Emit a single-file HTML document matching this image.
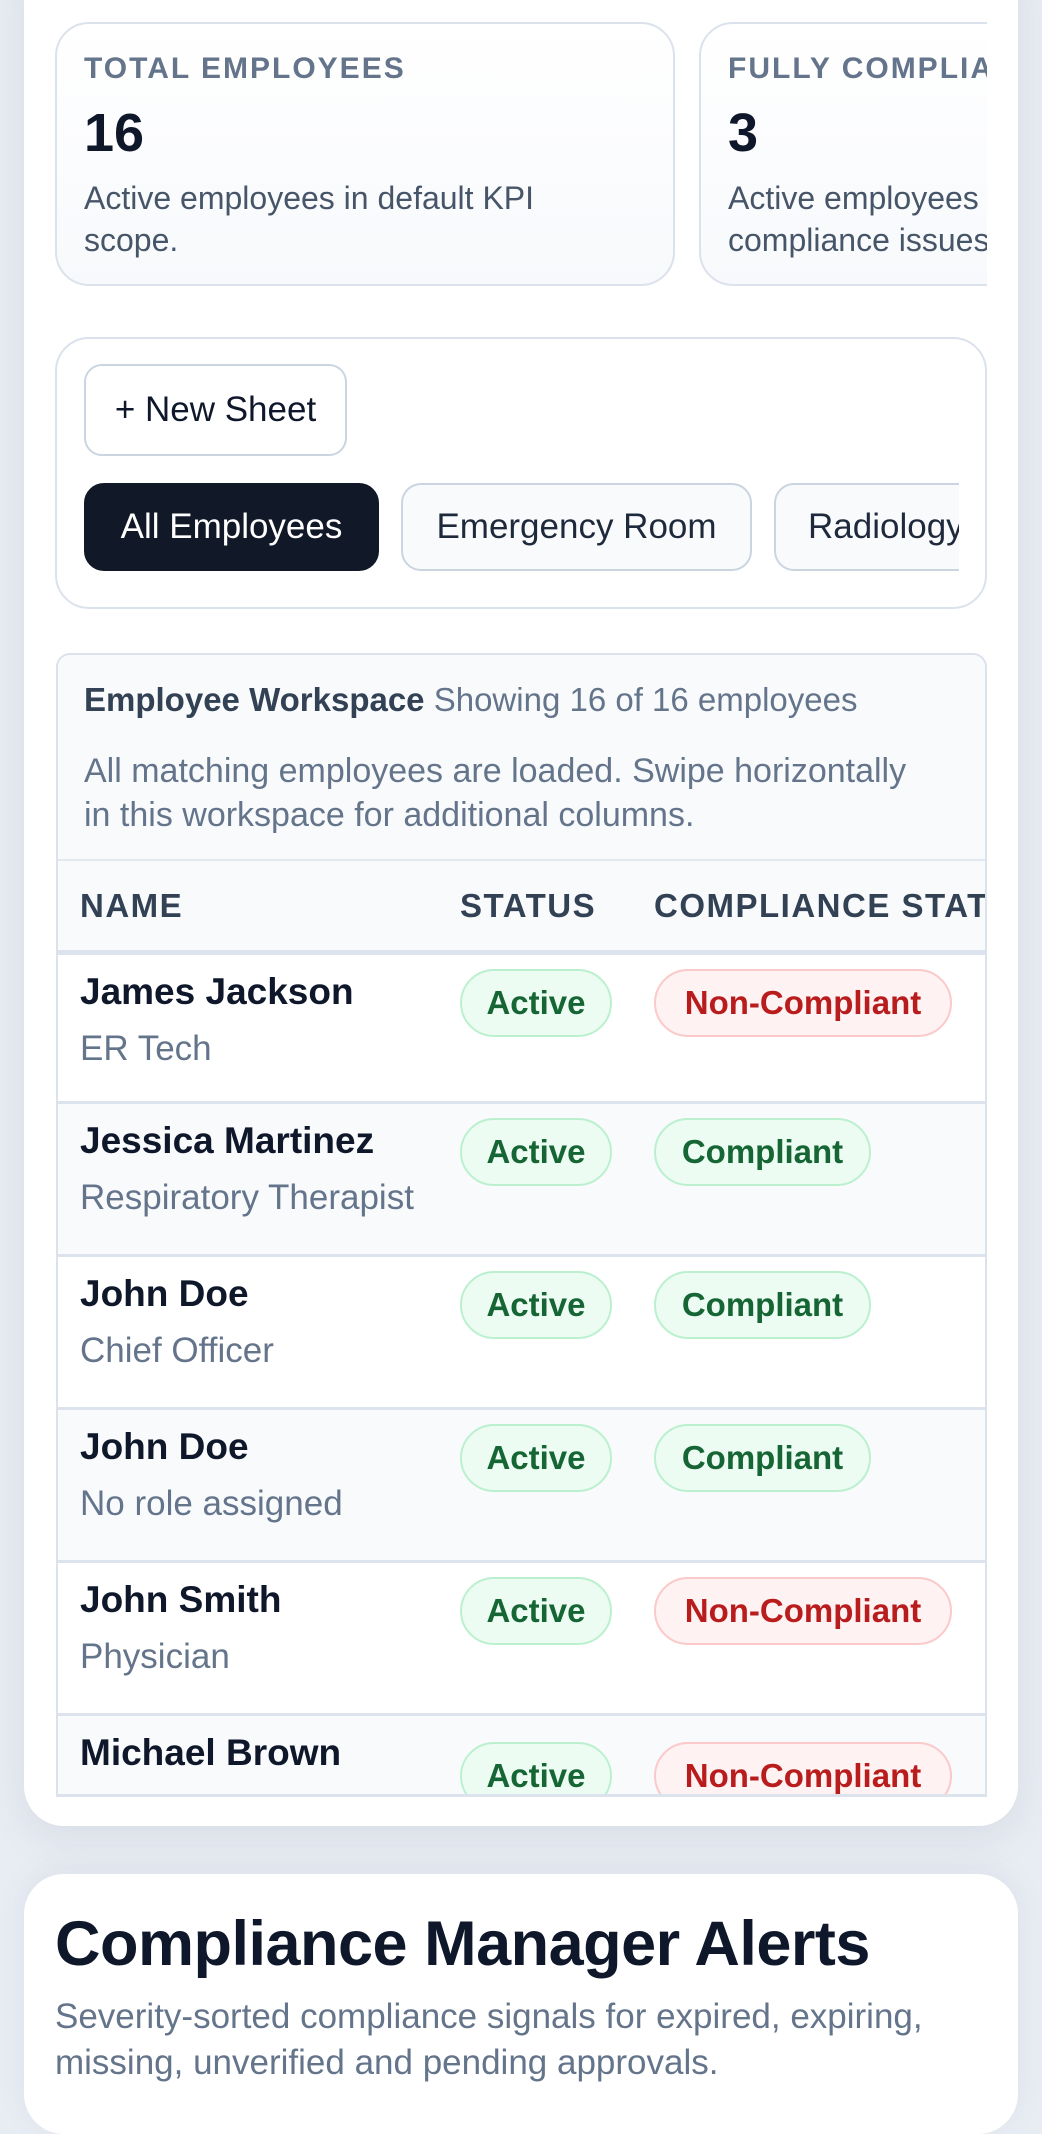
<!DOCTYPE html>
<html><head><meta charset="utf-8">
<style>
*{box-sizing:border-box;margin:0;padding:0}
html,body{width:1042px;height:2048px;overflow:hidden;background:#e8ecf3;font-family:"Liberation Sans",sans-serif}
.abs{position:absolute}
.outer{left:24px;top:-60px;width:994px;height:1886px;background:#fff;border-radius:40px;box-shadow:0 10px 40px rgba(100,116,139,.12)}
.kpi{border:2px solid #dbe2ec;border-radius:34px;background:linear-gradient(#fff,#f7f9fc);height:264px;top:22px}
.lbl{font-size:30px;font-weight:bold;color:#64748b;letter-spacing:2px;position:absolute;left:27px;top:28px;white-space:nowrap}
.num{font-size:54px;font-weight:bold;color:#0f172a;position:absolute;left:27px;top:78px}
.desc{font-size:32px;color:#475569;line-height:42px;position:absolute;left:27px;top:153px;white-space:nowrap}
.btn{border:2px solid #cbd5e1;border-radius:18px;font-size:35px;display:flex;align-items:center;justify-content:center;white-space:nowrap}
.ws{left:56px;top:653px;width:931px;height:1143px;overflow:hidden;border:2px solid #dbe2ec;border-bottom:none;border-radius:14px 14px 0 0}
.row{position:absolute;left:0;width:931px;height:153px;border-top:3px solid #dde3ec}
.nm{position:absolute;left:22px;top:16px;font-size:37px;font-weight:bold;color:#0f172a;white-space:nowrap}
.rl{position:absolute;left:22px;top:74px;font-size:35px;color:#64748b;white-space:nowrap}
.pill{position:absolute;top:14px;height:68px;border-radius:34px;font-size:33px;font-weight:bold;display:flex;align-items:center;justify-content:center}
.g{background:#edfcf2;border:2px solid #bbf0cf;color:#166534}
.r{background:#fef2f2;border:2px solid #fbc9c9;color:#b91c1c}
.th{position:absolute;top:26px;font-size:33px;font-weight:bold;color:#334155;letter-spacing:1.5px;white-space:nowrap}
</style></head><body>
<div class="abs outer"></div>
<div class="abs" style="left:55px;top:0;width:932px;height:300px;overflow:hidden">
  <div class="abs kpi" style="left:0;width:620px">
    <div class="lbl">TOTAL EMPLOYEES</div>
    <div class="num">16</div>
    <div class="desc">Active employees in default KPI<br>scope.</div>
  </div>
  <div class="abs kpi" style="left:644px;width:620px">
    <div class="lbl">FULLY COMPLIANT</div>
    <div class="num">3</div>
    <div class="desc">Active employees with no<br>compliance issues.</div>
  </div>
</div>
<div class="abs" style="left:55px;top:337px;width:932px;height:272px;border:2px solid #dbe2ec;border-radius:34px;background:#fff"></div>
<div class="abs btn" style="left:84px;top:364px;width:263px;height:92px;background:#fff;color:#0f172a">+ New Sheet</div>
<div class="abs" style="left:84px;top:483px;width:875px;height:90px;overflow:hidden">
  <div class="abs btn" style="left:0;top:0;width:295px;height:88px;background:#111827;border-color:#111827;color:#fff;border-radius:20px">All Employees</div>
  <div class="abs btn" style="left:317px;top:0;width:351px;height:88px;background:#f8fafc;color:#1e293b;border-radius:20px">Emergency Room</div>
  <div class="abs btn" style="left:690px;top:0;width:240px;height:88px;background:#f8fafc;color:#1e293b;border-radius:20px;justify-content:flex-start;padding-left:32px">Radiology</div>
</div>
<div class="abs ws">
  <div class="abs" style="left:0;top:0;width:931px;height:206px;background:#f8fafc">
    <div class="abs" style="left:26px;top:26px;font-size:33px;white-space:nowrap;color:#64748b"><b style="color:#334155">Employee Workspace</b> Showing 16 of 16 employees</div>
    <div class="abs" style="left:26px;top:94px;font-size:34px;line-height:44px;color:#64748b;white-space:nowrap">All matching employees are loaded. Swipe horizontally<br>in this workspace for additional columns.</div>
  </div>
  <div class="abs" style="left:0;top:204px;width:931px;height:96px;background:#f8fafc;border-top:2px solid #e2e8f0;border-bottom:5px solid #dde3ee">
    <div class="th" style="left:22px">NAME</div>
    <div class="th" style="left:402px">STATUS</div>
    <div class="th" style="left:596px">COMPLIANCE STATUS</div>
  </div>
  <div class="row" style="top:300px;background:#fff;border-top:none"><div class="nm">James Jackson</div><div class="rl">ER Tech</div><div class="pill g" style="left:402px;width:152px">Active</div><div class="pill r" style="left:596px;width:298px">Non-Compliant</div></div>
  <div class="row" style="top:446px;background:#f8fafc"><div class="nm">Jessica Martinez</div><div class="rl">Respiratory Therapist</div><div class="pill g" style="left:402px;width:152px">Active</div><div class="pill g" style="left:596px;width:217px">Compliant</div></div>
  <div class="row" style="top:599px;background:#fff"><div class="nm">John Doe</div><div class="rl">Chief Officer</div><div class="pill g" style="left:402px;width:152px">Active</div><div class="pill g" style="left:596px;width:217px">Compliant</div></div>
  <div class="row" style="top:752px;background:#f8fafc"><div class="nm">John Doe</div><div class="rl">No role assigned</div><div class="pill g" style="left:402px;width:152px">Active</div><div class="pill g" style="left:596px;width:217px">Compliant</div></div>
  <div class="row" style="top:905px;background:#fff"><div class="nm">John Smith</div><div class="rl">Physician</div><div class="pill g" style="left:402px;width:152px">Active</div><div class="pill r" style="left:596px;width:298px">Non-Compliant</div></div>
  <div class="row" style="top:1058px;background:#f8fafc"><div class="nm">Michael Brown</div><div class="rl">Nurse</div><div class="pill g" style="left:402px;width:152px;top:26px">Active</div><div class="pill r" style="left:596px;width:298px;top:26px">Non-Compliant</div></div>
</div>
<div class="abs" style="left:56px;top:1794px;width:931px;height:3px;background:#dde3ec"></div>
<div class="abs" style="left:24px;top:1874px;width:994px;height:260px;background:#fff;border-radius:40px;box-shadow:0 -6px 30px rgba(100,116,139,.08)">
  <div class="abs" style="left:31px;top:34px;font-size:63px;font-weight:bold;color:#0f172a;white-space:nowrap;letter-spacing:-0.5px">Compliance Manager Alerts</div>
  <div class="abs" style="left:31px;top:120px;font-size:35px;line-height:46px;color:#64748b;white-space:nowrap">Severity-sorted compliance signals for expired, expiring,<br>missing, unverified and pending approvals.</div>
</div>
</body></html>
